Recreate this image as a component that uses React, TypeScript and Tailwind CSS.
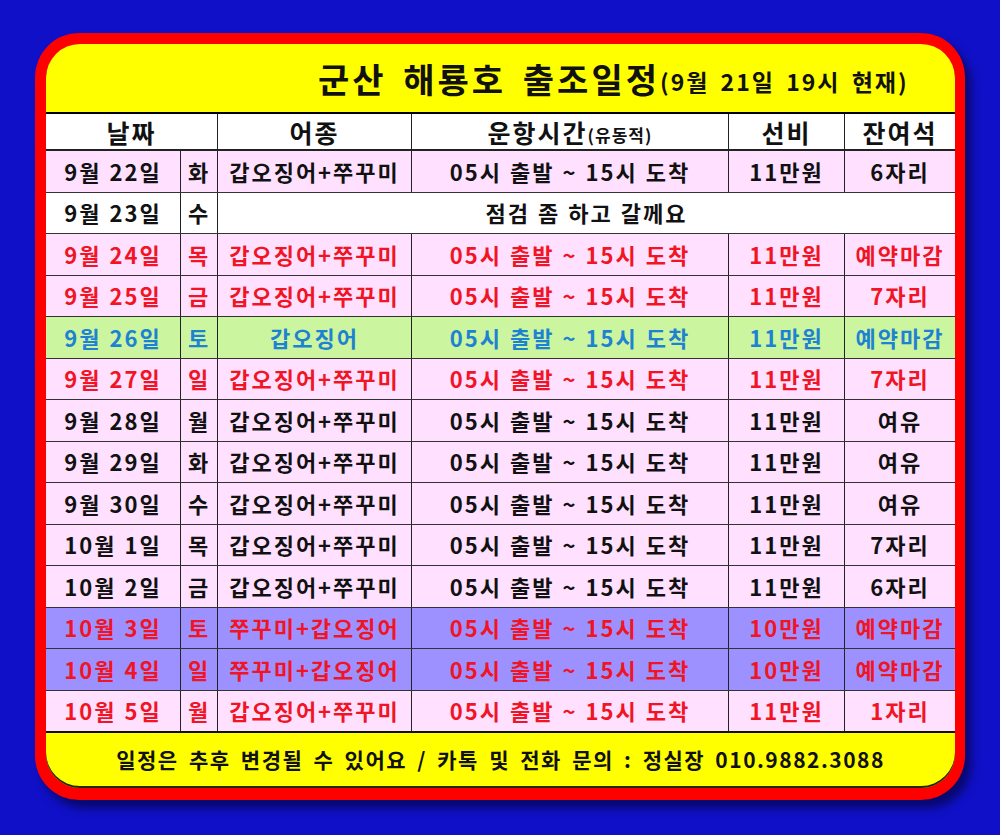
const font = { fontFamily: '"Noto Sans CJK KR", "Noto Sans", sans-serif' };

type Row = {
  date: string;
  day: string;
  fish: string;
  price: string;
  seats: string;
  tone: "black" | "red" | "blue";
  bg: string;
  note?: string;
};

const rows: Row[] = [
  { date: "9월 22일", day: "화", fish: "갑오징어+쭈꾸미", price: "11만원", seats: "6자리", tone: "black", bg: "bg-[#ffe1ff]" },
  { date: "9월 23일", day: "수", fish: "", price: "", seats: "", tone: "black", bg: "bg-white", note: "점검 좀 하고 갈께요" },
  { date: "9월 24일", day: "목", fish: "갑오징어+쭈꾸미", price: "11만원", seats: "예약마감", tone: "red", bg: "bg-[#ffe1ff]" },
  { date: "9월 25일", day: "금", fish: "갑오징어+쭈꾸미", price: "11만원", seats: "7자리", tone: "red", bg: "bg-[#ffe1ff]" },
  { date: "9월 26일", day: "토", fish: "갑오징어", price: "11만원", seats: "예약마감", tone: "blue", bg: "bg-[#ccf5a0]" },
  { date: "9월 27일", day: "일", fish: "갑오징어+쭈꾸미", price: "11만원", seats: "7자리", tone: "red", bg: "bg-[#ffe1ff]" },
  { date: "9월 28일", day: "월", fish: "갑오징어+쭈꾸미", price: "11만원", seats: "여유", tone: "black", bg: "bg-[#ffe1ff]" },
  { date: "9월 29일", day: "화", fish: "갑오징어+쭈꾸미", price: "11만원", seats: "여유", tone: "black", bg: "bg-[#ffe1ff]" },
  { date: "9월 30일", day: "수", fish: "갑오징어+쭈꾸미", price: "11만원", seats: "여유", tone: "black", bg: "bg-[#ffe1ff]" },
  { date: "10월 1일", day: "목", fish: "갑오징어+쭈꾸미", price: "11만원", seats: "7자리", tone: "black", bg: "bg-[#ffe1ff]" },
  { date: "10월 2일", day: "금", fish: "갑오징어+쭈꾸미", price: "11만원", seats: "6자리", tone: "black", bg: "bg-[#ffe1ff]" },
  { date: "10월 3일", day: "토", fish: "쭈꾸미+갑오징어", price: "10만원", seats: "예약마감", tone: "red", bg: "bg-[#9d90ff]" },
  { date: "10월 4일", day: "일", fish: "쭈꾸미+갑오징어", price: "10만원", seats: "예약마감", tone: "red", bg: "bg-[#9d90ff]" },
  { date: "10월 5일", day: "월", fish: "갑오징어+쭈꾸미", price: "11만원", seats: "1자리", tone: "red", bg: "bg-[#ffe1ff]" },
];

const toneClass = {
  black: "text-[#111]",
  red: "text-[#f01424]",
  blue: "text-[#1e82d2]",
};

const cols = "grid grid-cols-[134px_37px_194px_317px_116px_111px]";
const cell = "flex items-center justify-center border-l border-[#222]";

export default function App() {
  return (
    <div className="h-[835px] w-full bg-[#1010c8] pt-[33px] pl-[35px]" style={font}>
      <div className="w-[930px] h-[767px] rounded-[44px] bg-[#ff0000] pt-[11px] pl-[11px] pr-[10px] pb-[12px] shadow-[6px_8px_10px_rgba(0,0,30,0.55)]">
        <div className="h-full rounded-[34px] bg-[#ffff00] overflow-hidden flex flex-col shadow-[inset_0_-2px_0_rgba(0,0,0,0.85)]">
          {/* title */}
          <div className="h-[68px] flex items-center pl-[272px] font-bold text-[#111] whitespace-nowrap">
            <span className="text-[34px] tracking-[3px] [word-spacing:6px]">군산 해룡호 출조일정</span>
            <span className="text-[23px] tracking-[2px] [word-spacing:4px] mt-[6px]">(9월 21일 19시 현재)</span>
          </div>

          {/* table */}
          <div className="h-[619px] flex flex-col border-t-2 border-black font-bold text-[22px] tracking-[2px] [word-spacing:1px] whitespace-nowrap">
            <div className={`${cols} h-[37px] shrink-0 bg-white text-[25px] tracking-[2px] text-[#111] border-b-2 border-[#222]`}>
              <div className="col-span-2 flex items-center justify-center">날짜</div>
              <div className={cell}>어종</div>
              <div className={cell}>
                운항시간<span className="text-[17px] tracking-[1px] mt-[4px]">(유동적)</span>
              </div>
              <div className={cell}>선비</div>
              <div className={cell}>잔여석</div>
            </div>

            {rows.map((r, i) => (
              <div
                key={r.date}
                className={`${cols} flex-1 ${r.bg} ${toneClass[r.tone]} ${i > 0 ? "border-t border-[#333]" : ""}`}
              >
                <div className="flex items-center justify-center">{r.date}</div>
                <div className={cell}>{r.day}</div>
                {r.note ? (
                  <div className={`${cell} col-span-4`}>{r.note}</div>
                ) : (
                  <>
                    <div className={cell}>{r.fish}</div>
                    <div className={cell}>05시 출발 ~ 15시 도착</div>
                    <div className={cell}>{r.price}</div>
                    <div className={cell}>{r.seats}</div>
                  </>
                )}
              </div>
            ))}
          </div>

          {/* footer */}
          <div className="flex-1 flex items-center justify-center border-t-2 border-[#111] font-bold text-[21px] tracking-[1.5px] [word-spacing:4px] text-[#111] pb-[2px] whitespace-nowrap">
            일정은 추후 변경될 수 있어요 / 카톡 및 전화 문의 : 정실장 010.9882.3088
          </div>
        </div>
      </div>
    </div>
  );
}
